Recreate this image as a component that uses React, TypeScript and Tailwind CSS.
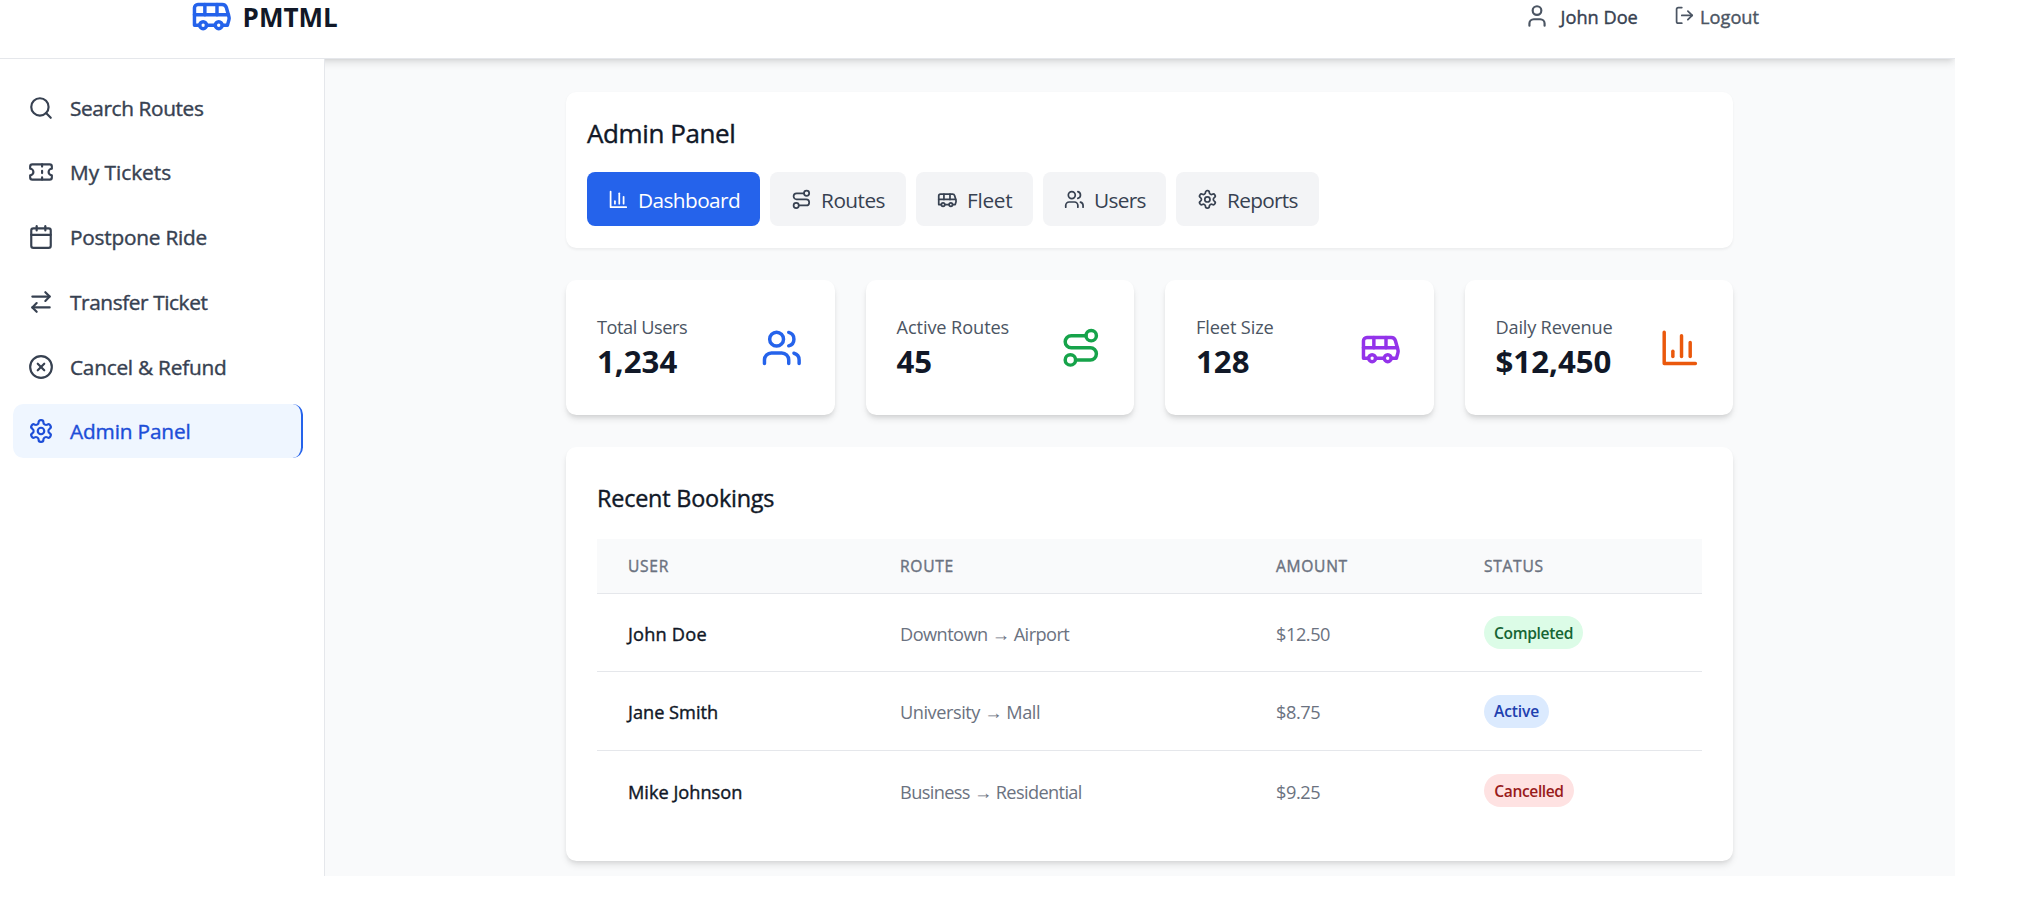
import type { ComponentType, ReactNode } from "react";
import {
  ArrowRightLeft,
  Bus,
  Calendar,
  CircleX,
  LogOut,
  Route,
  Search,
  Ticket,
  User,
  Users,
} from "lucide-react";

type IconProps = { className?: string };
type Icon = ComponentType<IconProps>;

function Glyph({ className, children }: { className?: string; children: ReactNode }) {
  return (
    <svg
      viewBox="0 0 24 24"
      fill="none"
      stroke="currentColor"
      strokeWidth="2"
      strokeLinecap="round"
      strokeLinejoin="round"
      className={className}
    >
      {children}
    </svg>
  );
}

function BarChart({ className }: IconProps) {
  return (
    <Glyph className={className}>
      <path d="M3 3v18h18" />
      <path d="M18 17V9" />
      <path d="M13 17V5" />
      <path d="M8 17v-3" />
    </Glyph>
  );
}

function Gear({ className }: IconProps) {
  return (
    <Glyph className={className}>
      <path d="M12.22 2h-.44a2 2 0 0 0-2 2v.18a2 2 0 0 1-1 1.73l-.43.25a2 2 0 0 1-2 0l-.15-.08a2 2 0 0 0-2.73.73l-.22.38a2 2 0 0 0 .73 2.73l.15.1a2 2 0 0 1 1 1.72v.51a2 2 0 0 1-1 1.74l-.15.09a2 2 0 0 0-.73 2.73l.22.38a2 2 0 0 0 2.73.73l.15-.08a2 2 0 0 1 2 0l.43.25a2 2 0 0 1 1 1.73V20a2 2 0 0 0 2 2h.44a2 2 0 0 0 2-2v-.18a2 2 0 0 1 1-1.73l.43-.25a2 2 0 0 1 2 0l.15.08a2 2 0 0 0 2.73-.73l.22-.39a2 2 0 0 0-.73-2.73l-.15-.08a2 2 0 0 1-1-1.74v-.5a2 2 0 0 1 1-1.74l.15-.09a2 2 0 0 0 .73-2.73l-.22-.38a2 2 0 0 0-2.73-.73l-.15.08a2 2 0 0 1-2 0l-.43-.25a2 2 0 0 1-1-1.73V4a2 2 0 0 0-2-2z" />
      <circle cx="12" cy="12" r="3" />
    </Glyph>
  );
}

const navItems: { label: string; icon: Icon; text: string; active?: boolean }[] = [
  { label: "Search Routes", icon: Search, text: "tracking-[-0.38px]" },
  { label: "My Tickets", icon: Ticket, text: "tracking-normal" },
  { label: "Postpone Ride", icon: Calendar, text: "tracking-[-0.22px]" },
  { label: "Transfer Ticket", icon: ArrowRightLeft, text: "tracking-[-0.4px]" },
  { label: "Cancel & Refund", icon: CircleX, text: "tracking-[-0.24px]" },
  { label: "Admin Panel", icon: Gear, text: "tracking-[-0.16px]", active: true },
];

const tabs: { label: string; icon: Icon; box: string; text: string; active?: boolean }[] = [
  { label: "Dashboard", icon: BarChart, box: "w-[173px]", text: "tracking-[-0.6px]", active: true },
  { label: "Routes", icon: Route, box: "w-[136px]", text: "tracking-[-0.55px]" },
  { label: "Fleet", icon: Bus, box: "w-[117px]", text: "tracking-[-0.3px]" },
  { label: "Users", icon: Users, box: "w-[123px]", text: "tracking-[-0.7px]" },
  { label: "Reports", icon: Gear, box: "w-[143px]", text: "tracking-[-0.7px]" },
];

const stats: { label: string; value: string; icon: Icon; color: string; text: string }[] = [
  { label: "Total Users", value: "1,234", icon: Users, color: "text-[#2563eb]", text: "tracking-[-0.45px]" },
  { label: "Active Routes", value: "45", icon: Route, color: "text-[#16a34a]", text: "tracking-[-0.1px]" },
  { label: "Fleet Size", value: "128", icon: Bus, color: "text-[#9333ea]", text: "tracking-[-0.13px]" },
  { label: "Daily Revenue", value: "$12,450", icon: BarChart, color: "text-[#ea580c]", text: "tracking-[-0.2px]" },
];

const bookings = [
  {
    user: "John Doe", userText: "tracking-[0.2px]",
    route: "Downtown → Airport", routeText: "tracking-[-0.55px]", amount: "$12.50",
    status: "Completed", badge: "bg-[#dcfce7] text-[#166534] w-[99px] tracking-[-0.35px]",
    row: "h-[78px] border-b",
  },
  {
    user: "Jane Smith", userText: "tracking-normal",
    route: "University → Mall", routeText: "tracking-[-0.46px]", amount: "$8.75",
    status: "Active", badge: "bg-[#dbeafe] text-[#1e40af] w-[65px] tracking-[-0.15px]",
    row: "h-[79px] border-b",
  },
  {
    user: "Mike Johnson", userText: "tracking-normal",
    route: "Business → Residential", routeText: "tracking-[-0.62px]", amount: "$9.25",
    status: "Cancelled", badge: "bg-[#fee2e2] text-[#991b1b] w-[90px] tracking-[-0.4px]",
    row: "h-[79px]",
  },
];

const columns = "grid grid-cols-[272px_376px_208px_249px] items-center border-[#e5e7eb] *:pl-[31px]";
const cardShadow =
  "shadow-[0_5.2px_7.8px_-1.3px_rgba(0,0,0,0.1),0_2.6px_5.2px_-2.6px_rgba(0,0,0,0.1)]";
const medium = "font-medium [-webkit-text-stroke:0.4px_currentColor]";

function Header() {
  return (
    <header className={`relative z-10 flow-root h-[59px] border-b border-[#e5e7eb] bg-white ${cardShadow}`}>
      <div className="-mt-[26px] flex h-[84px] items-center justify-between pr-[196px] pl-[191px]">
        <div className="flex items-center gap-[10px]">
          <Bus className="-mt-[2px] size-[41.6px] text-[#2563eb]" />
          <span className="pt-px text-[26px] leading-[36px] font-bold text-[#111827]">PMTML</span>
        </div>
        <div className={`flex items-center text-[18.2px] leading-[26px] ${medium}`}>
          <User className="-mt-px size-[26px] text-[#4b5563]" />
          <span className="ml-[11px] pt-[2px] tracking-normal text-[#374151]">John Doe</span>
          <LogOut className="-mt-px ml-[36.5px] size-[20.8px] text-[#4b5563]" />
          <span className="ml-[5px] pt-[2px] text-[#4b5563]">Logout</span>
        </div>
      </div>
    </header>
  );
}

function Sidebar() {
  return (
    <aside className="relative z-20 w-[325px] shrink-0 border-r border-[#e5e7eb] bg-white pt-[21px] pl-[13px]">
      <nav className="flex flex-col gap-[10.8px]">
        {navItems.map(({ label, icon: ItemIcon, text, active }) => (
          <a
            key={label}
            className={`flex h-[54px] w-[290px] items-center gap-[16px] rounded-[10.4px] pl-[15px] text-[20.8px] ${medium} ${
              active ? "border-r-[2px] border-[#2563eb] bg-[#eff6ff] text-[#1d4ed8]" : "text-[#374151]"
            }`}
          >
            <ItemIcon className="mt-px size-[26px]" />
            <span className={`pt-[2px] leading-[31px] ${text}`}>{label}</span>
          </a>
        ))}
      </nav>
    </aside>
  );
}

function PanelTabs() {
  return (
    <section className="h-[156px] rounded-[10.4px] bg-white px-[21px] pt-[21px] shadow-[0_1.3px_2.6px_0_rgba(0,0,0,0.05)]">
      <h1 className={`h-[59px] pt-[2px] text-[26px] leading-[36px] tracking-[-0.4px] text-[#111827] ${medium}`}>
        Admin Panel
      </h1>
      <div className="flex gap-[10px]">
        {tabs.map(({ label, icon: TabIcon, box, text, active }) => (
          <button
            key={label}
            className={`flex h-[54px] items-center rounded-[8px] pl-[20.8px] text-[20.8px] ${box} ${
              active ? "bg-[#2563eb] text-white" : "bg-[#f3f4f6] text-[#374151]"
            }`}
          >
            <TabIcon className="size-[20.8px] shrink-0" />
            <span className={`ml-[9.5px] pt-[2px] leading-[31px] ${text}`}>{label}</span>
          </button>
        ))}
      </div>
    </section>
  );
}

function Stats() {
  return (
    <section className="mt-[32px] grid grid-cols-4 gap-[31px]">
      {stats.map(({ label, value, icon: StatIcon, color, text }) => (
        <div
          key={label}
          className={`flex h-[135px] items-center justify-between rounded-[10.4px] bg-white pr-[32px] pl-[31px] ${cardShadow}`}
        >
          <div>
            <p className={`pt-[2px] text-[18.2px] leading-[26px] text-[#4b5563] ${text}`}>{label}</p>
            <p className="pt-px text-[31.2px] leading-[41.6px] font-bold text-[#111827]">{value}</p>
          </div>
          <StatIcon className={`size-[41.6px] ${color}`} />
        </div>
      ))}
    </section>
  );
}

function Bookings() {
  return (
    <section className={`mt-[32px] h-[414px] rounded-[10.4px] bg-white px-[31px] pt-[31px] ${cardShadow}`}>
      <h2 className={`h-[61px] pt-[2px] text-[23.4px] leading-[36px] tracking-[-0.2px] text-[#111827] ${medium}`}>
        Recent Bookings
      </h2>
      <div
        className={`${columns} h-[55px] border-b bg-[#f9fafb] text-[15.6px] leading-[21px] tracking-[0.7px] text-[#6b7280] uppercase ${medium}`}
      >
        <span>User</span>
        <span>Route</span>
        <span>Amount</span>
        <span>Status</span>
      </div>
      {bookings.map((b) => (
        <div key={b.user} className={`${columns} ${b.row} text-[18.2px] leading-[26px] text-[#6b7280]`}>
          <span className={`pt-[2px] text-[#111827] ${medium} ${b.userText}`}>{b.user}</span>
          <span className={`pt-[2px] ${b.routeText}`}>{b.route}</span>
          <span className="pt-[2px] tracking-[-0.45px]">{b.amount}</span>
          <div className="flex">
            <span
              className={`flex h-[33px] items-center justify-center rounded-full pt-px text-[15.6px] leading-[21px] font-semibold ${b.badge}`}
            >
              {b.status}
            </span>
          </div>
        </div>
      ))}
    </section>
  );
}

export default function App() {
  return (
    <div className="min-h-[905px] bg-white font-['Open_Sans',sans-serif]">
      <div className="h-[876px] w-[1955px] overflow-hidden bg-[#f9fafb]">
        <Header />
        <div className="flex h-[817px]">
          <Sidebar />
          <main className="pt-[33px] pl-[241px]">
            <div className="w-[1167px]">
              <PanelTabs />
              <Stats />
              <Bookings />
            </div>
          </main>
        </div>
      </div>
    </div>
  );
}
